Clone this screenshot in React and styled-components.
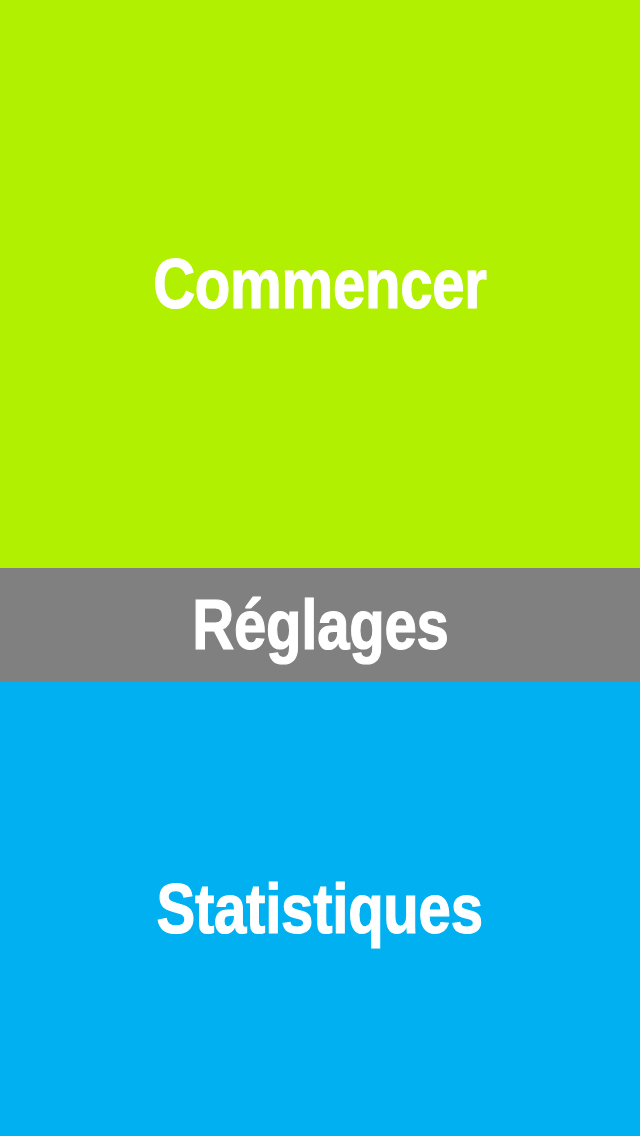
import React from "react";
import styled, { createGlobalStyle } from "styled-components";

const GlobalStyle = createGlobalStyle`
  html, body {
    margin: 0;
    padding: 0;
    background: #ffffff;
  }
  * {
    box-sizing: border-box;
  }
`;

const Screen = styled.div`
  display: flex;
  flex-direction: column;
  width: 640px;
  height: 1136px;
  overflow: hidden;
`;

const Tile = styled.button`
  display: flex;
  align-items: center;
  justify-content: center;
  height: ${(p) => p.$height}px;
  flex-shrink: 0;
  width: 100%;
  border: none;
  margin: 0;
  padding: 0;
  cursor: pointer;
  background-color: ${(p) => p.$color};
`;

// condensed heavy look: bold sans squeezed horizontally + thin stroke
const Label = styled.span`
  display: inline-block;
  font-family: "Liberation Sans", Arial, sans-serif;
  font-weight: 700;
  font-size: 70px;
  line-height: 1;
  color: #ffffff;
  -webkit-text-stroke: 1.2px #ffffff;
  letter-spacing: -0.3px;
  transform: scaleX(0.83);
  white-space: nowrap;
`;

const items = [
  { label: "Commencer", color: "#b1f000", height: 568 },
  { label: "Réglages", color: "#808080", height: 114 },
  { label: "Statistiques", color: "#00b0f0", height: 454 },
];

const App = () => {
  return (
    <>
      <GlobalStyle />
      <Screen>
        {items.map((item) => (
          <Tile key={item.label} $color={item.color} $height={item.height}>
            <Label>{item.label}</Label>
          </Tile>
        ))}
      </Screen>
    </>
  );
};

export default App;
